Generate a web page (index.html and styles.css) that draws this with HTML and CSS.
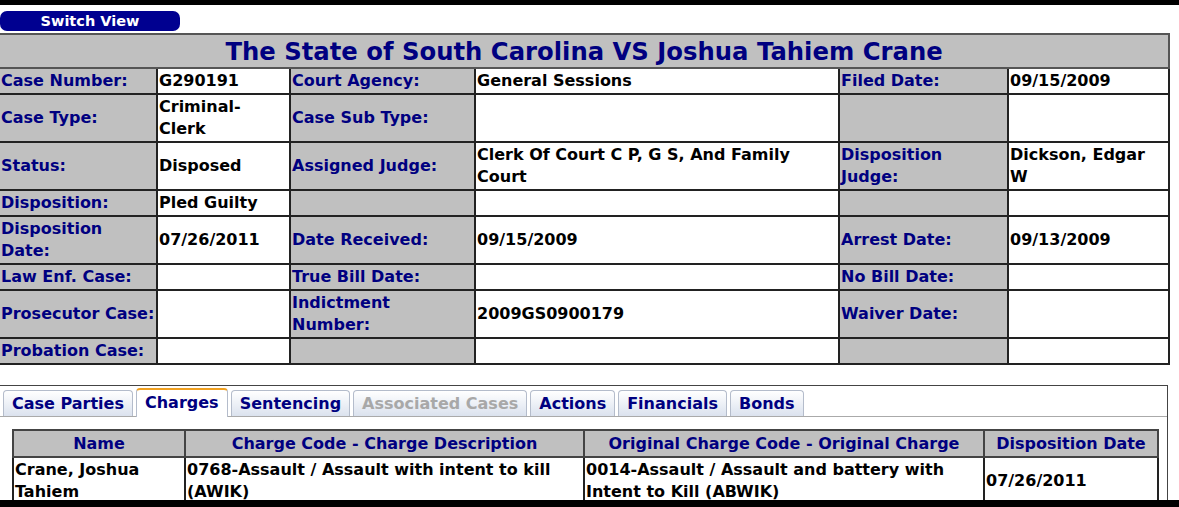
FILE: index.html
```html
<!DOCTYPE html>
<html>
<head>
<meta charset="utf-8">
<link rel="stylesheet" href="styles.css">
</head>
<body>
<div class="topbar"></div>
<div class="page">
  <div class="btnrow"><button class="switch">Switch View</button></div>
  <table class="case">
    <colgroup>
      <col class="c1"><col class="c2"><col class="c3"><col class="c4"><col class="c5"><col class="c6">
    </colgroup>
    <tr><th colspan="6" class="title">The State of South Carolina VS Joshua Tahiem Crane</th></tr>
    <tr><td class="lbl">Case Number:</td><td class="val">G290191</td><td class="lbl">Court Agency:</td><td class="val">General Sessions</td><td class="lbl">Filed Date:</td><td class="val">09/15/2009</td></tr>
    <tr><td class="lbl">Case Type:</td><td class="val">Criminal-<br>Clerk</td><td class="lbl">Case Sub Type:</td><td class="val"></td><td class="lbl"></td><td class="val"></td></tr>
    <tr><td class="lbl">Status:</td><td class="val">Disposed</td><td class="lbl">Assigned Judge:</td><td class="val">Clerk Of Court C P, G S, And Family<br>Court</td><td class="lbl">Disposition<br>Judge:</td><td class="val">Dickson, Edgar<br>W</td></tr>
    <tr><td class="lbl">Disposition:</td><td class="val">Pled Guilty</td><td class="lbl"></td><td class="val"></td><td class="lbl"></td><td class="val"></td></tr>
    <tr><td class="lbl">Disposition<br>Date:</td><td class="val">07/26/2011</td><td class="lbl">Date Received:</td><td class="val">09/15/2009</td><td class="lbl">Arrest Date:</td><td class="val">09/13/2009</td></tr>
    <tr><td class="lbl">Law Enf. Case:</td><td class="val"></td><td class="lbl">True Bill Date:</td><td class="val"></td><td class="lbl">No Bill Date:</td><td class="val"></td></tr>
    <tr><td class="lbl">Prosecutor Case:</td><td class="val"></td><td class="lbl">Indictment<br>Number:</td><td class="val">2009GS0900179</td><td class="lbl">Waiver Date:</td><td class="val"></td></tr>
    <tr><td class="lbl">Probation Case:</td><td class="val"></td><td class="lbl"></td><td class="val"></td><td class="lbl"></td><td class="val"></td></tr>
  </table>

  <div class="panel">
    <ul class="tabs">
      <li class="tab">Case Parties</li>
      <li class="tab active">Charges</li>
      <li class="tab">Sentencing</li>
      <li class="tab disabled">Associated Cases</li>
      <li class="tab">Actions</li>
      <li class="tab">Financials</li>
      <li class="tab">Bonds</li>
    </ul>
    <div class="panelbody">
      <table class="charges">
        <colgroup><col class="k1"><col class="k2"><col class="k3"><col class="k4"></colgroup>
        <tr><th>Name</th><th>Charge Code - Charge Description</th><th>Original Charge Code - Original Charge</th><th>Disposition Date</th></tr>
        <tr><td>Crane, Joshua Tahiem</td><td>0768-Assault / Assault with intent to kill (AWIK)</td><td>0014-Assault / Assault and battery with Intent to Kill (ABWIK)</td><td>07/26/2011</td></tr>
      </table>
    </div>
  </div>
</div>
<div class="bottombar"></div>
</body>
</html>
```

FILE: styles.css
```css
html, body {
  margin: 0;
  padding: 0;
  background: #fff;
  font-family: "DejaVu Sans", Verdana, sans-serif;
  font-weight: bold;
  overflow: hidden;
}
.topbar {
  height: 5px;
  background: #000;
}
.bottombar {
  height: 7px;
  background: #000;
}
.page {
  height: 495px;
  overflow: hidden;
}
.btnrow {
  padding-top: 6px;
  height: 22px;
}
.switch {
  display: block;
  width: 180px;
  height: 20px;
  margin: 0;
  padding: 0;
  border: none;
  border-radius: 7px;
  background: #000090;
  color: #fff;
  font-family: "DejaVu Sans", Verdana, sans-serif;
  font-weight: bold;
  font-size: 14.5px;
  line-height: 20px;
}
.case {
  width: 1170px;
  margin-left: -2px;
  border-collapse: collapse;
  table-layout: fixed;
  border: 2px solid #555;
}
.c1 { width: 158px; }
.c2 { width: 133px; }
.c3 { width: 185px; }
.c4 { width: 364px; }
.c5 { width: 169px; }
.c6 { width: 161px; }
.case td, .case th {
  border: 2px solid #222;
  padding: 1px 1px;
  font-size: 16px;
  line-height: 22px;
  vertical-align: middle;
  text-align: left;
  white-space: nowrap;
}
.case .title {
  background: #c0c0c0;
  color: #000080;
  font-size: 24.3px;
  line-height: 30px;
  padding: 2px 1px 0;
  text-align: center;
  border-color: #555;
}
.lbl {
  background: #c0c0c0;
  color: #000080;
}
.val {
  background: #fff;
  color: #000;
}
.panel {
  margin-top: 20px;
  width: 1167px;
  border-top: 1px solid #444;
  border-right: 1px solid #444;
  height: 200px;
}
.tabs {
  list-style: none;
  margin: 0;
  padding: 3px 0 0 3px;
  display: flex;
  gap: 3px;
  border-bottom: 1px solid #aaa;
  height: 27px;
  align-items: flex-end;
}
.tab {
  height: 25px;
  padding: 0 8px;
  border: 1px solid #b4bccb;
  border-bottom: none;
  border-radius: 4px 4px 0 0;
  background: linear-gradient(#ffffff, #dbe2ee);
  color: #000080;
  font-size: 16px;
  line-height: 26px;
}
.tab.active {
  background: #fff;
  border-top: 2px solid #f0a020;
  height: 27px;
  margin-bottom: -1px;
  line-height: 26px;
}
.tab.disabled {
  color: #a8a8a8;
}
.panelbody {
  padding: 12px 11px 0 12px;
}
.charges {
  width: 1145px;
  border-collapse: collapse;
  table-layout: fixed;
  border: 2px solid #555;
}
.k1 { width: 172px; }
.k2 { width: 399px; }
.k3 { width: 400px; }
.k4 { width: 174px; }
.charges th {
  background: #c0c0c0;
  color: #000080;
  font-size: 16px;
  line-height: 23px;
  border: 2px solid #444;
  padding: 1px;
  text-align: center;
}
.charges td {
  background: #fff;
  color: #000;
  font-size: 16px;
  line-height: 22px;
  border: 2px solid #222;
  padding: 1px;
  text-align: left;
  vertical-align: middle;
}
```
